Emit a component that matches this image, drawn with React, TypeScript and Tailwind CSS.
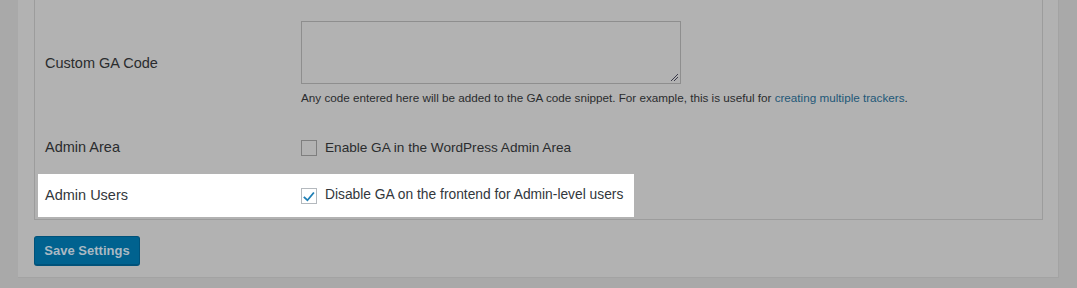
import React from "react";

const font = { fontFamily: '"Liberation Sans", Arial, sans-serif' };

const Checkbox = ({ checked, white }: { checked?: boolean; white?: boolean }) => (
  <span
    className={`flex h-[16px] w-[16px] shrink-0 items-center justify-center border ${
      white ? "border-[#b4b9be] bg-white" : "border-[#7e7e7e] bg-[#b2b2b2]"
    }`}
  >
    {checked && (
      <svg width="14" height="14" viewBox="0 0 20 20">
        <path d="M3.5 10.2l4.2 4.2L16 4.2l2 1.6L7.9 18 1.7 12z" fill="#1e7fb5" />
      </svg>
    )}
  </span>
);

export default function App() {
  return (
    <div className="h-[288px] w-[1077px] overflow-hidden bg-[#a9a9a9] pl-[18px]" style={font}>
      <div className="h-[278px] w-[1041px] border-r border-b border-[#a3a3a3] bg-[#b2b2b2] pl-[16px]">
        {/* settings table */}
        <div className="w-[1009px] border-x border-b border-[#9c9c9c] pl-[3px] pb-[2px]">
          <div className="flex h-[128px] items-center">
            <div className="w-[263px] pl-[7px] text-[14.5px] text-[#2a2c2e]">Custom GA Code</div>
            <div className="flex flex-col">
              <div className="relative h-[63px] w-[380px] border border-[#8e8e8e]">
                <svg className="absolute right-[1px] bottom-[1px]" width="9" height="9" viewBox="0 0 9 9">
                  <path d="M1 8L8 1M4 8L8 4" stroke="#3a3a4a" strokeWidth="1" />
                </svg>
              </div>
              <p className="mt-[5px] text-[11.7px] leading-[18px] text-[#2a2c2e]">
                Any code entered here will be added to the GA code snippet. For example, this is useful for{" "}
                <span className="text-[#1e5878]">creating multiple trackers</span>.
              </p>
            </div>
          </div>
          <div className="flex h-[46px] items-center pb-[6px]">
            <div className="w-[263px] pl-[7px] text-[14.5px] text-[#2a2c2e]">Admin Area</div>
            <label className="flex items-center gap-[8px] text-[13.6px] text-[#2a2c2e]">
              <Checkbox />
              Enable GA in the WordPress Admin Area
            </label>
          </div>
          <div className="flex h-[43px] w-[596px] items-center bg-white">
            <div className="w-[263px] pl-[7px] text-[14.5px] text-[#32373c]">Admin Users</div>
            <label className="flex items-center gap-[8px] text-[13.8px] text-[#32373c]">
              <Checkbox checked white />
              Disable GA on the frontend for Admin-level users
            </label>
          </div>
        </div>
        <button className="mt-[16px] h-[30px] w-[106px] rounded-[3px] border border-[#00527a] border-b-[2px] bg-[#00628f] text-[13px] font-bold text-[#aab9c3]">
          Save Settings
        </button>
      </div>
    </div>
  );
}
